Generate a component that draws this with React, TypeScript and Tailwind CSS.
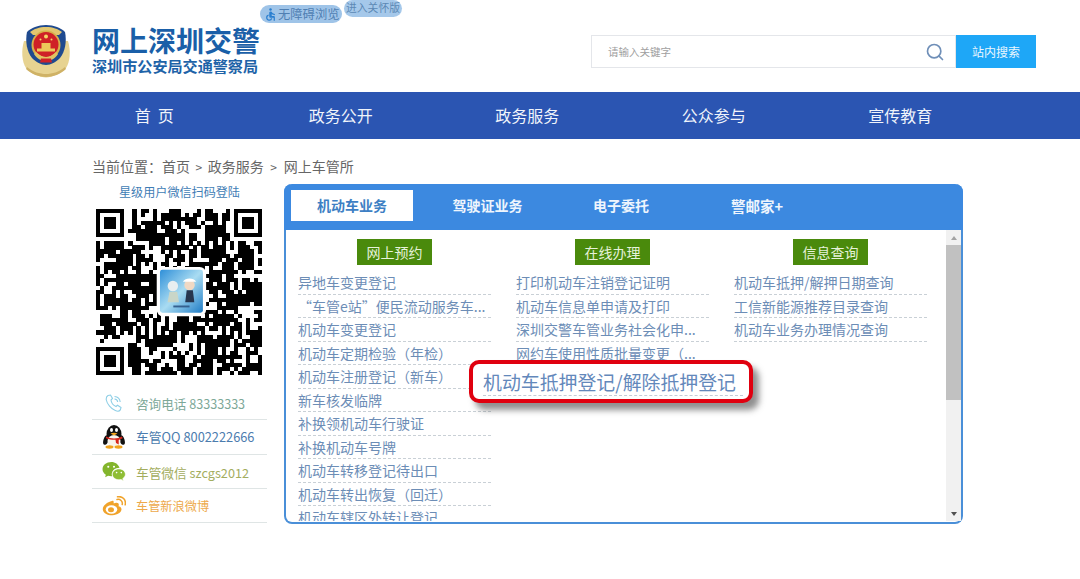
import React from "react";
import { Search } from "lucide-react";
import { MdAccessible } from "react-icons/md";

const FONT = { fontFamily: '"Noto Sans CJK SC", "Noto Sans", sans-serif' };

const col1 = ["异地车变更登记", "“车管e站”便民流动服务车...", "机动车变更登记", "机动车定期检验（年检）", "机动车注册登记（新车）", "新车核发临牌", "补换领机动车行驶证", "补换机动车号牌", "机动车转移登记待出口", "机动车转出恢复（回迁）", "机动车辖区外转让登记"];
const col2 = ["打印机动车注销登记证明", "机动车信息单申请及打印", "深圳交警车管业务社会化申...", "网约车使用性质批量变更（..."];
const col3 = ["机动车抵押/解押日期查询", "工信新能源推荐目录查询", "机动车业务办理情况查询"];

function QR() {
  const n = 41;
  const cells: React.ReactElement[] = [];
  let s = 20240;
  const inFinder = (x: number, y: number) => (x < 8 && y < 8) || (x >= n - 8 && y < 8) || (x < 8 && y >= n - 8);
  const next = () => {
    s = (s * 1103515245 + 12345) & 0x7fffffff;
    return (s >> 11) & 15;
  };
  const g: boolean[][] = [];
  for (let y = 0; y < n; y++) {
    g[y] = [];
    for (let x = 0; x < n; x++) {
      const r = next();
      const left = x > 0 ? g[y][x - 1] : false;
      const up = y > 0 ? g[y - 1][x] : false;
      let on = r < 8;
      if (r < 6 && left) on = true;
      else if (r >= 12 && up) on = true;
      g[y][x] = on;
      if (inFinder(x, y)) continue;
      if (on) cells.push(<rect key={x + "-" + y} x={x} y={y} width={1.02} height={1.02} />);
    }
  }
  const finder = (x: number, y: number) => (
    <g key={x + "_" + y}>
      <rect x={x} y={y} width={7} height={7} />
      <rect x={x + 1} y={y + 1} width={5} height={5} fill="#fff" />
      <rect x={x + 2} y={y + 2} width={3} height={3} />
    </g>
  );
  return (
    <svg viewBox="0 0 41 41" width={166} height={166} shapeRendering="crispEdges" fill="#000" className="block">
      {cells}
      {finder(0, 0)}
      {finder(34, 0)}
      {finder(0, 34)}
      <g shapeRendering="auto">
        <rect x={15} y={14.3} width={12.2} height={12.2} rx={1.6} fill="#fff" />
        <defs>
          <linearGradient id="qrlogo" x1="0" y1="0" x2="1" y2="1">
            <stop offset="0" stopColor="#2f8fd8" />
            <stop offset="0.5" stopColor="#a9dcf2" />
            <stop offset="1" stopColor="#1f7cc6" />
          </linearGradient>
        </defs>
        <g transform="translate(15.8 15) scale(1.178) translate(-14.2 -14.2)">
          <rect x={14.2} y={14.2} width={9} height={9} rx={0.5} fill="url(#qrlogo)" />
          <circle cx={16.9} cy={17.6} r={1.1} fill="#e8eef0" />
          <path d="M15.8 21l.4-2.200h1.600l.4 2.200z" fill="#c9d6c8" />
          <circle cx={20.4} cy={17.4} r={1.1} fill="#f1d9c4" />
          <path d="M19 16.700c.6-.9 2.200-.9 2.800 0z" fill="#fff" />
          <path d="M19.500 21l.3-2.500h1.300l.3 2.500z" fill="#27364f" />
          <rect x={17} y={21.7} width={3.4} height={0.4} fill="#35608f" />
        </g>
      </g>
    </svg>
  );
}

function Emblem() {
  return (
    <svg width={50} height={53} viewBox="0 0 50 53" className="block">
      <path d="M3 16C0 26 1 37 5 43c5 6 14 9 20 9.500 6-.5 15-3.500 20-9.500 4-6 5-17 2-27z" fill="#e7d391" />
      <path d="M6 42c6 5 13 7 19 7s13-2 19-7l1 2c-5 5-13 8-20 8s-15-3-20-8z" fill="#cfb266" />
      <path d="M25 0c8 0 15 3 19 7 2 9 0 20-5 26-4 4-9 7-14 7s-10-3-14-7C6 27 4 16 6 7c4-4 11-7 19-7z" fill="#1f4a8f" />
      <path d="M25 2c7 0 12 2 16 5l-3 3H12L9 7c4-3 9-5 16-5z" fill="#e3c76f" />
      <circle cx={25} cy={20} r={14.500} fill="#d8b04a" />
      <circle cx={25} cy={19.500} r={12.500} fill="#cf2027" />
      <path d="M16 23.500h18v3H16zM20.500 18h9v5.500h-9z" fill="#ecc95a" />
      <circle cx={25} cy={11.500} r={2} fill="#f4d565" />
      <circle cx={19.500} cy={14.500} r={1} fill="#f4d565" />
      <circle cx={30.500} cy={14.500} r={1} fill="#f4d565" />
      <path d="M13 29c3 5 8 7 12 7s9-2 12-7l-2-2c-3 3-7 5-10 5s-7-2-10-5z" fill="#e2c362" />
      <path d="M20 33.500h10l1 4H19z" fill="#cf2027" />
    </svg>
  );
}

function Phone() {
  return (
    <svg width={18} height={18} viewBox="0 0 18 18" fill="none" stroke="#8fcfe6" strokeWidth={1.1} className="block">
      <path d="M3 1.500l2.500-.5 2 3.500-1.500 1.500c.3 2.500 2.500 5.500 5 6.500l1.500-1.200 3.500 2.300-.7 2.300c-.8 1.300-3 1.500-5 .7C6 14.800 2.200 10.200 1.300 6 1 4 1.700 2.300 3 1.500z" />
      <path d="M9.500 2.500c3.200.3 5.400 2.500 5.700 5.500M9.500 5c1.800.2 3 1.400 3.200 3" />
    </svg>
  );
}

function Penguin() {
  return (
    <svg width={24} height={25} viewBox="0 0 24 25" className="block">
      <ellipse cx={12} cy={10} rx={7.500} ry={9} fill="#111" />
      <ellipse cx={4} cy={16} rx={2.500} ry={5} fill="#111" transform="rotate(18 4 16)" />
      <ellipse cx={20} cy={16} rx={2.500} ry={5} fill="#111" transform="rotate(-18 20 16)" />
      <ellipse cx={12} cy={17} rx={6.500} ry={6} fill="#f7f4ec" />
      <ellipse cx={9.500} cy={6} rx={1.500} ry={2} fill="#fff" />
      <ellipse cx={14.500} cy={6} rx={1.500} ry={2} fill="#fff" />
      <path d="M8.500 9.500c2-1 5-1 7 0l-3.500 2z" fill="#f0a21d" />
      <path d="M4 12.500c5 2.500 11 2.500 16 0l.7 1.800-4 1.800v4.500l-2.700-1.500-.5-3.300c-3 .2-6-.3-9.500-1.500z" fill="#d8261c" />
      <ellipse cx={7.500} cy={23} rx={4} ry={1.700} fill="#f0a21d" />
      <ellipse cx={16.500} cy={23} rx={4} ry={1.700} fill="#f0a21d" />
    </svg>
  );
}

function Wechat() {
  return (
    <svg width={24} height={21} viewBox="0 0 23 20" className="block">
      <path d="M9 1C4.300 1 .5 4 .5 7.800c0 2.200 1.300 4 3.200 5.300L3 15.500l2.800-1.400c1 .3 2 .4 3.200.4h.7c-.2-.6-.3-1.200-.3-1.800 0-3.500 3.300-6.200 7.400-6.200C15.700 3.200 12.700 1 9 1z" fill="#83b52c" />
      <path d="M16.200 7.500c-3.500 0-6.300 2.300-6.300 5.200s2.800 5.200 6.300 5.200c.7 0 1.400-.1 2-.3l2.300 1.200-.6-2c1.500-1 2.500-2.500 2.500-4.100 0-2.900-2.700-5.200-6.200-5.200z" fill="#8fbe35" stroke="#fff" strokeWidth={0.6} />
      <circle cx={6} cy={5.500} r={1} fill="#fff" />
      <circle cx={11.500} cy={5.500} r={1} fill="#fff" />
      <circle cx={14} cy={11} r={0.800} fill="#fff" />
      <circle cx={18.500} cy={11} r={0.800} fill="#fff" />
    </svg>
  );
}

function Weibo() {
  return (
    <svg width={24} height={20} viewBox="0 0 24 20" className="block">
      <path d="M10 5C5 6 .5 10 .8 13.500 1.100 17.500 6 19.500 10.500 19.300c5-.3 9-3 9-6 0-2-2-2.800-3-3 .8-2 .2-3.800-2.500-3.500-1.300.1-2.500.7-2.500.7.600-2-.2-3-1.500-2.500z" fill="#f0a32b" />
      <ellipse cx={9.500} cy={13.500} rx={5.800} ry={4.200} fill="#fff" />
      <ellipse cx={9} cy={13.800} rx={3} ry={2.500} fill="#f0a32b" />
      <path d="M15 3.500c3-.8 6 1.700 5.200 5M15.500.8c5-1 8.800 3 7.700 8" fill="none" stroke="#f0a32b" strokeWidth={1.500} strokeLinecap="round" />
    </svg>
  );
}

function Item({ children }: { children: string }) {
  return (
    <div className="h-[23.5px] leading-[22px] text-[14px] text-[#6c8db6] border-b border-dashed border-[#c9d0d6] whitespace-nowrap overflow-hidden">
      {children}
    </div>
  );
}

function Column({ title, items }: { title: string; items: string[] }) {
  return (
    <div className="w-[193px] shrink-0 flex flex-col">
      <div className="self-center w-[75px] h-[26px] bg-[#4a8a0c] text-[#e6f2da] text-[14px] leading-[26px] text-center">{title}</div>
      <div className="mt-[6px]">
        {items.map((t) => (
          <Item key={t}>{t}</Item>
        ))}
      </div>
    </div>
  );
}

function ContactRow({ icon, text, textClass }: { icon: React.ReactNode; text: string; textClass: string }) {
  return (
    <div className="h-[34.3px] flex items-center border-b border-[#dfe5e5]">
      <div className="w-[44px] flex justify-center shrink-0">{icon}</div>
      <span className={"whitespace-nowrap " + textClass}>{text}</span>
    </div>
  );
}

export default function App() {
  return (
    <div className="relative w-[1080px] h-[579px] overflow-hidden bg-white" style={FONT}>
      <header className="relative h-[92px] flex items-center">
        <div className="ml-[21px] mt-[10px] w-[71px]">
          <Emblem />
        </div>
        <div className="flex flex-col w-[200px] mt-[6px]">
          <div className="text-[28px] leading-[32px] font-bold text-[#1a5fa8] whitespace-nowrap">网上深圳交警</div>
          <div className="text-[15.1px] leading-[18px] font-bold text-[#1e63a8] whitespace-nowrap">深圳市公安局交通警察局</div>
        </div>
        <div className="ml-[299px] mt-[11px] w-[365px] h-[33px] box-border border border-[#e4e6ea] flex items-center justify-between pl-[16px] pr-[10px]">
          <span className="text-[10.5px] text-[#a0a0a0]">请输入关键字</span>
          <Search size={20} strokeWidth={2} className="text-[#6f8fb8]" />
        </div>
        <div className="mt-[11px] w-[80px] h-[33px] bg-[#1ea7f7] text-[#eaf6fe] text-[12px] leading-[33px] text-center">站内搜索</div>
        <div className="absolute left-[260px] top-[5px] w-[82px] h-[18px] rounded-full bg-[#9fc4e8] flex items-center pl-[3px] text-[#4f7fb3] text-[12.3px] whitespace-nowrap">
          <MdAccessible size={15} className="text-[#2a7fd0] shrink-0" />
          <span>无障碍浏览</span>
        </div>
        <div className="absolute left-[344px] top-0 w-[58px] h-[17px] rounded-full bg-[#a5c8ea] text-center text-[#5c88b5] text-[10.8px] leading-[14px] whitespace-nowrap">进入关怀版</div>
      </header>

      <nav className="h-[47px] bg-[#2b55b2] flex pl-[61px]">
        {["首  页", "政务公开", "政务服务", "公众参与", "宣传教育"].map((t) => (
          <div key={t} className="w-[186.5px] text-center text-[#f0f4fb] text-[16px] leading-[46px] whitespace-pre">
            {t}
          </div>
        ))}
      </nav>

      <div className="pl-[92px] pt-[17px] h-[45px] text-[14px] leading-[20px] text-[#666] whitespace-nowrap">
        当前位置：首页
        <span className="mx-[5.5px] text-[12px]">&gt;</span>政务服务
        <span className="ml-[6.5px] mr-[7px] text-[12px]">&gt;</span>网上车管所
      </div>

      <main className="flex pl-[92px]">
        <aside className="w-[175px] shrink-0">
          <div className="text-center text-[12.1px] leading-[16px] text-[#3f7db5]">星级用户微信扫码登陆</div>
          <div className="mt-[9px] ml-[4px]">
            <QR />
          </div>
          <div className="mt-[11px]">
            <ContactRow icon={<Phone />} text="咨询电话 83333333" textClass="text-[12.6px] pt-[3px] text-[#7da898]" />
            <ContactRow icon={<Penguin />} text="车管QQ 8002222666" textClass="text-[12.8px] text-[#4c7cae]" />
            <ContactRow icon={<Wechat />} text="车管微信 szcgs2012" textClass="text-[12.7px] pt-[2px] text-[#a3ad5e]" />
            <ContactRow icon={<Weibo />} text="车管新浪微博" textClass="text-[12.2px] pt-[2px] text-[#eda94b]" />
          </div>
        </aside>

        <section className="relative ml-[17px] w-[679px] h-[340px] box-border border-2 border-t-0 border-[#4a8fd8] rounded-[8px]">
          <div className="-mx-[2px] h-[46px] bg-[#3c89e0] rounded-t-[8px] flex pl-[7px] pt-[6px] text-[14px] leading-[31px] font-bold text-[#eef5fd] text-center whitespace-nowrap">
            <div className="w-[122px] h-[31px] bg-white text-[#3d7fc4]">机动车业务</div>
            <div className="ml-[22px] w-[105px]">驾驶证业务</div>
            <div className="ml-[37px] w-[88px]">电子委托</div>
            <div className="ml-[46px] w-[92px] text-[14.5px]">警邮家+</div>
          </div>
          <div className="flex h-[291px] overflow-hidden">
            <div className="flex-1 flex overflow-hidden pt-[9px] pl-[12px] gap-[25px]">
              <Column title="网上预约" items={col1} />
              <Column title="在线办理" items={col2} />
              <Column title="信息查询" items={col3} />
            </div>
            <div className="w-[15px] shrink-0 bg-[#f1f1f1] flex flex-col items-center">
              <div className="h-[15px] flex items-center justify-center">
                <div className="w-0 h-0 border-x-[3.5px] border-x-transparent border-b-[4px] border-b-[#a3a3a3]" />
              </div>
              <div className="w-full h-[155px] bg-[#c1c1c1]" />
              <div className="flex-1" />
              <div className="h-[15px] flex items-center justify-center">
                <div className="w-0 h-0 border-x-[3.5px] border-x-transparent border-t-[4px] border-t-[#505050]" />
              </div>
            </div>
          </div>
          <div className="absolute left-[183px] top-[176px] w-[284px] h-[43px] box-border border-[4px] border-[#e0000f] rounded-[10px] bg-white shadow-[6px_7px_6px_rgba(70,70,70,0.6)] pl-[10px] pr-[6px] pt-[4px]">
            <div className="h-[28px] leading-[27px] text-[18.9px] text-[#6388bb] border-b border-dashed border-[#c4ccd6] whitespace-nowrap">机动车抵押登记/解除抵押登记</div>
          </div>
        </section>
      </main>
    </div>
  );
}
